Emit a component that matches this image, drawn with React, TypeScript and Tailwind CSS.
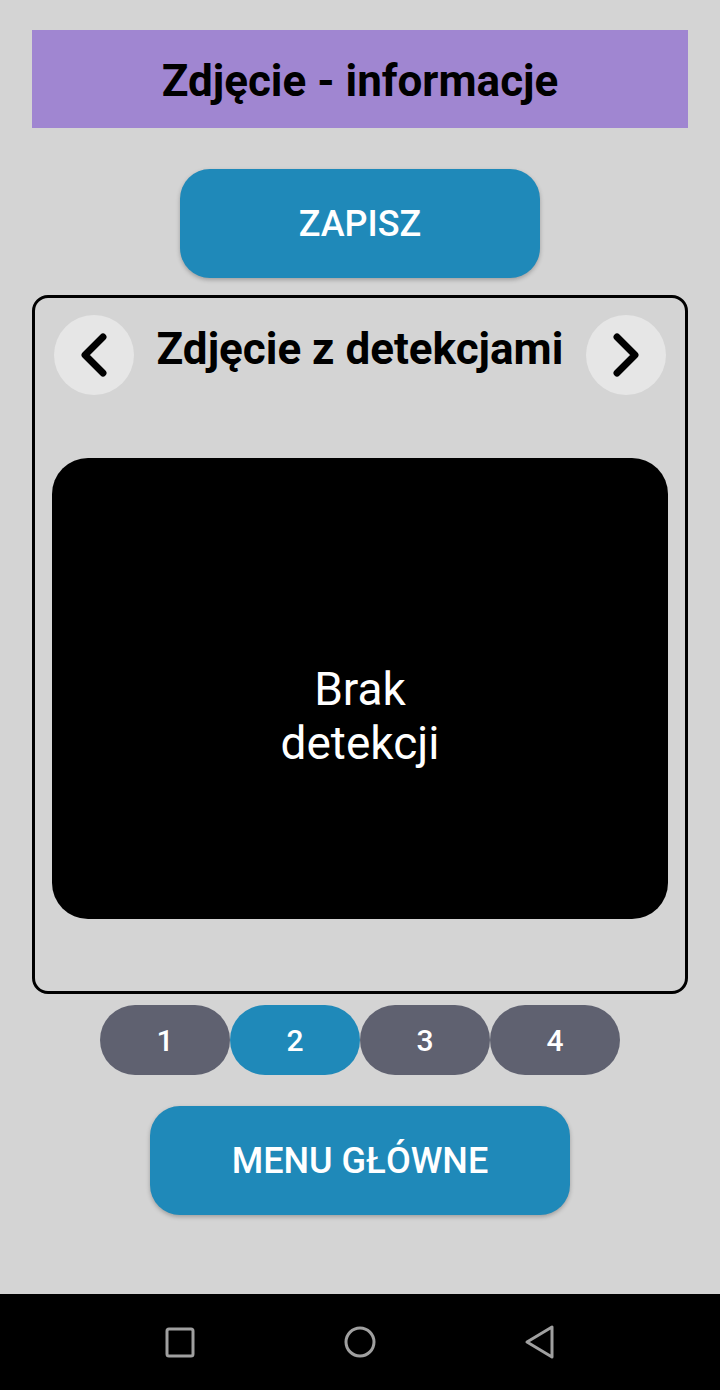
import { ChevronLeft, ChevronRight } from "lucide-react";

const pages = [1, 2, 3, 4];

export default function App() {
  const active = 2;
  return (
    <div className="w-[720px] h-[1390px] flex flex-col bg-[#d4d4d4] font-['Roboto',sans-serif]">
      <div className="flex-1 flex flex-col items-center px-8 pt-[30px]">
        {/* header */}
        <div className="w-full h-[98px] bg-[#a086d1] flex items-center justify-center">
          <h1 className="text-[44px] font-bold text-black leading-none mt-1">Zdjęcie - informacje</h1>
        </div>

        <button className="mt-[41px] w-[360px] h-[109px] rounded-[30px] bg-[#1f89b9] text-white text-[36px] font-medium shadow-[0_2px_4px_rgba(0,0,0,0.25)]">
          ZAPISZ
        </button>

        {/* card */}
        <div className="mt-[17px] w-full h-[699px] border-[3px] border-black rounded-[16px] flex flex-col px-[17px] pt-[17px]">
          <div className="flex items-center justify-between px-[2px]">
            <button className="w-20 h-20 rounded-full bg-[#e6e6e6] flex items-center justify-center">
              <ChevronLeft size={72} strokeWidth={2.3} className="text-black" />
            </button>
            <h2 className="text-[44px] font-bold text-black leading-none -mt-3">Zdjęcie z detekcjami</h2>
            <button className="w-20 h-20 rounded-full bg-[#e6e6e6] flex items-center justify-center">
              <ChevronRight size={72} strokeWidth={2.3} className="text-black" />
            </button>
          </div>
          <div className="mt-[63px] h-[461px] rounded-[36px] bg-black flex items-center justify-center pt-[54px]">
            <p className="text-white text-[46px] leading-[54px] text-center w-[200px]">Brak detekcji</p>
          </div>
        </div>

        {/* pagination */}
        <div className="mt-[11px] flex">
          {pages.map((p) => (
            <button
              key={p}
              className={
                p === active
                  ? "w-[130px] h-[70px] rounded-full bg-[#1f89b9] text-white text-[30px] font-medium"
                  : "w-[130px] h-[70px] rounded-full bg-[#5f6170] text-white text-[30px] font-medium"
              }
            >
              {p}
            </button>
          ))}
        </div>

        <button className="mt-[31px] w-[420px] h-[109px] rounded-[30px] bg-[#1f89b9] text-white text-[36px] font-medium shadow-[0_2px_4px_rgba(0,0,0,0.25)]">
          MENU GŁÓWNE
        </button>
      </div>

      {/* android nav bar */}
      <div className="h-[96px] bg-black flex items-center justify-center gap-[140px]">
        <svg width="40" height="40" viewBox="0 0 40 40">
          <rect x="7" y="7" width="26" height="27" rx="2" fill="none" stroke="#a0a0a0" strokeWidth="3" />
        </svg>
        <svg width="40" height="40" viewBox="0 0 40 40">
          <circle cx="20" cy="20" r="14" fill="none" stroke="#a0a0a0" strokeWidth="3" />
        </svg>
        <svg width="40" height="40" viewBox="0 0 40 40">
          <path d="M32 5 L32 35 L7 20 Z" fill="none" stroke="#a0a0a0" strokeWidth="3" strokeLinejoin="round" />
        </svg>
      </div>
    </div>
  );
}
